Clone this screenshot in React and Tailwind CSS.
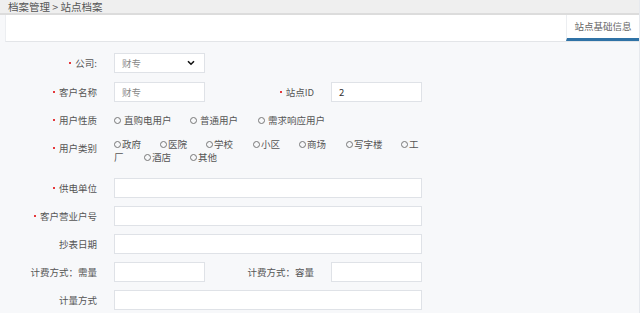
import React from "react";

const FONT = { fontFamily: '"Noto Sans CJK SC", "Noto Sans", sans-serif' };

function Req() {
  return <span className="inline-block w-[2px] h-[2px] bg-[#e5383b] mr-[4px] mb-[1px]" />;
}

function Label({ req, children, w = "w-[97px]" }) {
  return (
    <div className={`${w} h-[20px] shrink-0 flex items-center justify-end text-[9.5px] text-[#555]`}>
      {req && <Req />}
      <span>{children}</span>
    </div>
  );
}

function Input({ w = "w-[91px]", value, muted }) {
  return (
    <div
      className={`${w} h-[20px] shrink-0 bg-white border border-[#dfe2e7] flex items-center px-[7px] text-[9.5px] ${
        muted ? "text-[#888]" : "text-[#333]"
      }`}
    >
      {value}
    </div>
  );
}

function Circle() {
  return <span className="inline-block w-[7px] h-[7px] rounded-full border border-[#777] shrink-0" />;
}

function Radio({ children, w, gap = "ml-[3px]" }) {
  return (
    <div className={`${w} shrink-0 flex items-center`}>
      <Circle />
      <span className={gap}>{children}</span>
    </div>
  );
}

export default function App() {
  return (
    <div className="w-[640px] h-[313px] overflow-hidden bg-[#f7f8fa] border-r border-[#e6e9ee]" style={FONT}>
      {/* breadcrumb */}
      <div className="h-[15px] bg-[#efefef] border-b-2 border-[#dcdcdc] flex items-center pl-[8px] text-[10.5px] text-[#555] leading-[13px]">
        <span>档案管理 &gt; 站点档案</span>
      </div>
      {/* tab panel */}
      <div className="ml-[5px] h-[27px] bg-white border-b border-[#e3e5e8] border-l border-l-[#eceef1] flex justify-end">
        <div className="w-[73px] h-full border-l border-[#eceef1] border-b-[3px] border-b-[#2f72a6] flex items-center justify-center text-[9.5px] text-[#666]">
          站点基础信息
        </div>
      </div>

      {/* form */}
      <div className="flex flex-col">
        <div className="flex mt-[11px]">
          <Label req>公司:</Label>
          <div className="ml-[17px] w-[91px] h-[20px] bg-white border border-[#dfe2e7] flex items-center justify-between pl-[7px] pr-[9px] text-[9.5px] text-[#888]">
            <span>财专</span>
            <svg width="8" height="6" viewBox="0 0 8 6">
              <path d="M1 1.2 L4 4.2 L7 1.2" fill="none" stroke="#111" strokeWidth="1.6" />
            </svg>
          </div>
        </div>

        <div className="flex mt-[9px]">
          <Label req>客户名称</Label>
          <div className="ml-[17px]">
            <Input value="财专" muted />
          </div>
          <Label req w="w-[109px]">站点ID</Label>
          <div className="ml-[17px]">
            <Input value="2" />
          </div>
        </div>

        <div className="flex mt-[8px]">
          <Label req>用户性质</Label>
          <div className="ml-[17px] flex text-[9.5px] text-[#555] leading-[12px]">
            <Radio w="w-[76px]">直购电用户</Radio>
            <Radio w="w-[68px]">普通用户</Radio>
            <Radio w="w-[90px]">需求响应用户</Radio>
          </div>
        </div>

        <div className="flex mt-[8px]">
          <Label req>用户类别</Label>
          <div className="ml-[17px] flex flex-col text-[9.5px] text-[#555] leading-[13px]">
            <div className="flex">
              <Radio w="w-[46px]" gap="ml-[1px]">政府</Radio>
              <Radio w="w-[46px]" gap="ml-[1px]">医院</Radio>
              <Radio w="w-[47px]" gap="ml-[1px]">学校</Radio>
              <Radio w="w-[46px]" gap="ml-[1px]">小区</Radio>
              <Radio w="w-[47px]" gap="ml-[1px]">商场</Radio>
              <Radio w="w-[55px]" gap="ml-[1px]">写字楼</Radio>
              <Radio w="w-[20px]" gap="ml-[1px]">工</Radio>
            </div>
            <div className="flex">
              <div className="w-[30px] shrink-0">厂</div>
              <Radio w="w-[46px]" gap="ml-[1px]">酒店</Radio>
              <Radio w="w-[46px]" gap="ml-[1px]">其他</Radio>
            </div>
          </div>
        </div>

        <div className="flex mt-[14px]">
          <Label req>供电单位</Label>
          <div className="ml-[17px]">
            <Input w="w-[308px]" />
          </div>
        </div>

        <div className="flex mt-[8px]">
          <Label req>客户营业户号</Label>
          <div className="ml-[17px]">
            <Input w="w-[308px]" />
          </div>
        </div>

        <div className="flex mt-[8px]">
          <Label>抄表日期</Label>
          <div className="ml-[17px]">
            <Input w="w-[308px]" />
          </div>
        </div>

        <div className="flex mt-[8px]">
          <Label>计费方式：需量</Label>
          <div className="ml-[17px]">
            <Input />
          </div>
          <Label w="w-[109px]">计费方式：容量</Label>
          <div className="ml-[17px]">
            <Input />
          </div>
        </div>

        <div className="flex mt-[8px]">
          <Label>计量方式</Label>
          <div className="ml-[17px]">
            <Input w="w-[308px]" />
          </div>
        </div>
      </div>
    </div>
  );
}
